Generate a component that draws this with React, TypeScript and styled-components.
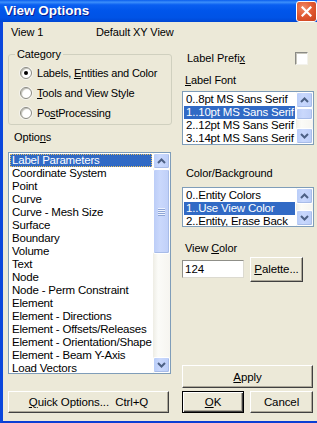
import React from "react";
import styled, { createGlobalStyle } from "styled-components";

const Global = createGlobalStyle`
  html, body { margin: 0; padding: 0; background: #ECE9D8; }
  body { width: 317px; height: 423px; overflow: hidden; font-family: "Liberation Sans", Arial, sans-serif; }
  * { box-sizing: border-box; }
`;

const Window = styled.div`
  width: 317px;
  height: 423px;
  display: flex;
  flex-direction: column;
  background: #ECE9D8;
  font-family: "Liberation Sans", Arial, sans-serif;
  font-size: 11px;
  color: #000;
  overflow: hidden;
`;

const TitleBar = styled.div`
  height: 22px;
  flex: none;
  display: flex;
  align-items: center;
  justify-content: space-between;
  padding: 0 0 1px 4px;
  background: linear-gradient(
    to bottom,
    #0a5ded 0%,
    #3c8ffb 10%,
    #0a5ff1 22%,
    #0055ea 50%,
    #0053e6 80%,
    #0047d4 100%
  );
`;

const Title = styled.span`
  font-family: "Liberation Sans", Arial, sans-serif;
  font-weight: bold;
  font-size: 13.5px;
  color: #fff;
  text-shadow: 1px 1px 0 #0a1d8f;
`;

const CloseButton = styled.div`
  width: 21px;
  height: 21px;
  margin-top: 1px;
  border: 1px solid #fff;
  border-radius: 3px;
  background: radial-gradient(circle at 35% 30%, #f08a66 0%, #e25b33 45%, #c9401c 100%);
  display: flex;
  align-items: center;
  justify-content: center;
`;

const Body = styled.div`
  flex: 1;
  display: flex;
  flex-direction: column;
  border-left: 3px solid #0b47dc;
  border-bottom: 3px solid #0a3ed4;
  padding: 4px 0 8px 5px;
`;

const HeaderRow = styled.div`
  display: flex;
  height: 13px;
  line-height: 13px;
  padding-left: 3px;
`;

const HeaderCell = styled.span<{ $w?: number }>`
  width: ${(p) => (p.$w ? `${p.$w}px` : "auto")};
  letter-spacing: -0.1px;
`;

const Columns = styled.div`
  flex: 1;
  display: flex;
  gap: 10px;
  margin-top: 9px;
`;

const LeftColumn = styled.div`
  width: 164px;
  display: flex;
  flex-direction: column;
`;

const RightColumn = styled.div`
  width: 132px;
  display: flex;
  flex-direction: column;
`;

const GroupBox = styled.fieldset`
  margin: 0;
  padding: 2px 0 0 6px;
  border: 1px solid #d0d0bf;
  border-radius: 3px;
  min-width: 0;
  height: 77px;
`;

const Legend = styled.legend`
  padding: 0 2px;
  line-height: 13px;
  height: 13px;
  letter-spacing: -0.1px;
`;

const RadioRow = styled.div`
  display: flex;
  align-items: center;
  height: 20px;
  padding-left: 5px;
  gap: 5px;
  letter-spacing: -0.2px;
`;

const RadioCircle = styled.span<{ $checked?: boolean }>`
  width: 12px;
  height: 12px;
  border-radius: 50%;
  background: #fff;
  border: 1px solid #8a8a80;
  box-shadow: inset 1px 1px 1px #bdbdb3, 0 0 0 1px #f4f3ee;
  display: flex;
  align-items: center;
  justify-content: center;
  &::after {
    content: "";
    width: 4px;
    height: 4px;
    border-radius: 50%;
    background: ${(p) => (p.$checked ? "#000" : "transparent")};
  }
`;

const Label = styled.div<{ $pad?: number; $mt?: number }>`
  line-height: 13px;
  height: 13px;
  padding-left: ${(p) => p.$pad ?? 0}px;
  margin-top: ${(p) => p.$mt ?? 0}px;
  letter-spacing: -0.1px;
`;

const ListBox = styled.div<{ $h: number; $mt: number; $w?: number }>`
  height: ${(p) => p.$h}px;
  width: ${(p) => (p.$w ? `${p.$w}px` : "100%")};
  margin-top: ${(p) => p.$mt}px;
  border: 1px solid #7f9db9;
  background: #fff;
  display: flex;
  overflow: hidden;
`;

const ListItems = styled.div`
  flex: 1;
  padding: 1px 1px 0 1px;
  overflow: hidden;
  min-width: 0;
`;

const ListItem = styled.div<{ $selected?: boolean; $focus?: boolean }>`
  height: 13px;
  line-height: 13px;
  padding-left: 2px;
  white-space: nowrap;
  font-size: 11.5px;
  letter-spacing: -0.2px;
  background: ${(p) => (p.$selected ? "#316ac5" : "transparent")};
  color: ${(p) => (p.$selected ? "#fff" : "#000")};
  outline: ${(p) => (p.$focus ? "1px dotted #e8c060" : "none")};
  outline-offset: -1px;
`;

const ScrollBar = styled.div`
  width: 17px;
  flex: none;
  display: flex;
  flex-direction: column;
  background: #f7f6f0;
`;

const ArrowButton = styled.div`
  height: 16px;
  flex: 0 1 16px;
  min-height: 0;
  border: 1px solid #fff;
  border-radius: 2px;
  background: linear-gradient(to right, #b9cdf8, #c9d8fd 40%, #bccef8);
  box-shadow: inset -1px -1px 0 #a8bce8;
  display: flex;
  align-items: center;
  justify-content: center;
`;

const Track = styled.div`
  flex: 1 1 auto;
  min-height: 0;
  display: flex;
  flex-direction: column;
  background: linear-gradient(to right, #eeede5, #fbfbf8 30%, #f6f5f0);
`;

const Thumb = styled.div<{ $h: number; $mt: number }>`
  height: ${(p) => p.$h}px;
  margin-top: ${(p) => p.$mt}px;
  flex: none;
  border: 1px solid #fff;
  border-radius: 2px;
  background: linear-gradient(to right, #bccdf7, #cad8fc 40%, #bfcff8);
  box-shadow: inset -1px -1px 0 #a8bce8;
  display: flex;
  flex-direction: column;
  align-items: center;
  justify-content: center;
  gap: 1px;
`;

const Grip = styled.span`
  width: 7px;
  height: 1px;
  background: #eef3ff;
  box-shadow: 0 1px 0 #8da4d6;
`;

const Underline = styled.span`
  text-decoration: underline;
  text-underline-offset: 1px;
`;

const PrefixRow = styled.div`
  height: 20px;
  display: flex;
  align-items: center;
  justify-content: space-between;
  padding: 0 6px 0 5px;
`;

const CheckBox = styled.span`
  width: 13px;
  height: 13px;
  background: #fff;
  border: 1px solid;
  border-color: #8b8b85 #f3f2ec #f3f2ec #8b8b85;
  box-shadow: inset 1px 1px 0 #c8c7bd;
`;

const InputRow = styled.div`
  display: flex;
  align-items: center;
  gap: 6px;
  height: 26px;
  margin-top: 1px;
`;

const TextInput = styled.div`
  width: 62px;
  height: 18px;
  background: #fff;
  border: 1px solid;
  border-color: #8f8f88 #dcdad0 #dcdad0 #8f8f88;
  padding-left: 2px;
  line-height: 16px;
  font-size: 11.5px;
`;

const Button = styled.div<{ $w?: number; $h?: number; $default?: boolean }>`
  width: ${(p) => (p.$w ? `${p.$w}px` : "100%")};
  height: ${(p) => p.$h ?? 22}px;
  flex: none;
  display: flex;
  align-items: center;
  justify-content: center;
  background: #ece9d8;
  border: 1px solid;
  border-color: ${(p) => (p.$default ? "#000" : "#fff #404040 #404040 #fff")};
  box-shadow: ${(p) =>
    p.$default
      ? "inset 1px 1px 0 #fff, inset -1px -1px 0 #404040, inset -2px -2px 0 #aca899"
      : "inset -1px -1px 0 #aca899"};
  font-size: 11.5px;
  letter-spacing: -0.1px;
`;

const QuickButton = styled(Button)`
  margin-top: 17px;
  width: 161px;
`;

const Spacer = styled.div`
  flex: 1;
`;

const BottomRow = styled.div`
  display: flex;
  gap: 6px;
  margin-top: 3px;
`;

const ChevronUp = () => (
  <svg width="9" height="6" viewBox="0 0 9 6">
    <path d="M1 5 L4.5 1.5 L8 5" fill="none" stroke="#4d6185" strokeWidth="2" />
  </svg>
);

const ChevronDown = () => (
  <svg width="9" height="6" viewBox="0 0 9 6">
    <path d="M1 1 L4.5 4.5 L8 1" fill="none" stroke="#4d6185" strokeWidth="2" />
  </svg>
);

const Scroll: React.FC<{ thumb?: { h: number; mt: number } }> = ({ thumb }) => (
  <ScrollBar>
    <ArrowButton>
      <ChevronUp />
    </ArrowButton>
    <Track>
      {thumb && (
        <Thumb $h={thumb.h} $mt={thumb.mt}>
          {thumb.h > 20 && (
            <>
              <Grip />
              <Grip />
              <Grip />
              <Grip />
            </>
          )}
        </Thumb>
      )}
    </Track>
    <ArrowButton>
      <ChevronDown />
    </ArrowButton>
  </ScrollBar>
);

const options = [
  "Label Parameters",
  "Coordinate System",
  "Point",
  "Curve",
  "Curve - Mesh Size",
  "Surface",
  "Boundary",
  "Volume",
  "Text",
  "Node",
  "Node - Perm Constraint",
  "Element",
  "Element - Directions",
  "Element - Offsets/Releases",
  "Element - Orientation/Shape",
  "Element - Beam Y-Axis",
  "Load Vectors",
];

const fonts = [
  "0..8pt MS Sans Serif",
  "1..10pt MS Sans Serif",
  "2..12pt MS Sans Serif",
  "3..14pt MS Sans Serif",
];

const colors = ["0..Entity Colors", "1..Use View Color", "2..Entity, Erase Back"];

export default function App() {
  return (
    <>
      <Global />
      <Window>
        <TitleBar>
          <Title>View Options</Title>
          <CloseButton>
            <svg width="11" height="11" viewBox="0 0 11 11">
              <path d="M1.5 1.5 L9.5 9.5 M9.5 1.5 L1.5 9.5" stroke="#fff" strokeWidth="2.2" strokeLinecap="square" />
            </svg>
          </CloseButton>
        </TitleBar>
        <Body>
          <HeaderRow>
            <HeaderCell $w={85}>View 1</HeaderCell>
            <HeaderCell>Default XY View</HeaderCell>
          </HeaderRow>
          <Columns>
            <LeftColumn>
              <GroupBox>
                <Legend>Category</Legend>
                <RadioRow>
                  <RadioCircle $checked />
                  <span>
                    Labels, <Underline>E</Underline>ntities and Color
                  </span>
                </RadioRow>
                <RadioRow>
                  <RadioCircle />
                  <span>
                    <Underline>T</Underline>ools and View Style
                  </span>
                </RadioRow>
                <RadioRow>
                  <RadioCircle />
                  <span>
                    Po<Underline>s</Underline>tProcessing
                  </span>
                </RadioRow>
              </GroupBox>
              <Label $pad={6} $mt={6}>
                Optio<Underline>n</Underline>s
              </Label>
              <ListBox $h={222} $mt={8} $w={163}>
                <ListItems>
                  {options.map((o, i) => (
                    <ListItem key={o} $selected={i === 0} $focus={i === 0}>
                      {o}
                    </ListItem>
                  ))}
                </ListItems>
                <Scroll thumb={{ h: 85, mt: 0 }} />
              </ListBox>
              <QuickButton>
                <span>
                  <Underline>Q</Underline>uick Options...&nbsp;&nbsp;Ctrl+Q
                </span>
              </QuickButton>
            </LeftColumn>
            <RightColumn>
              <PrefixRow>
                <span>
                  Label Prefi<Underline>x</Underline>
                </span>
                <CheckBox />
              </PrefixRow>
              <Label $pad={3} $mt={6}>
                <Underline>L</Underline>abel Font
              </Label>
              <ListBox $h={54} $mt={4}>
                <ListItems>
                  {fonts.map((f, i) => (
                    <ListItem key={f} $selected={i === 1}>
                      {f}
                    </ListItem>
                  ))}
                </ListItems>
                <Scroll thumb={{ h: 12, mt: 0 }} />
              </ListBox>
              <Label $pad={4} $mt={22}>
                Color/Background
              </Label>
              <ListBox $h={40} $mt={7}>
                <ListItems>
                  {colors.map((c, i) => (
                    <ListItem key={c} $selected={i === 1}>
                      {c}
                    </ListItem>
                  ))}
                </ListItems>
                <Scroll />
              </ListBox>
              <Label $pad={3} $mt={15}>
                View <Underline>C</Underline>olor
              </Label>
              <InputRow>
                <TextInput>124</TextInput>
                <Button $w={53} $h={25}>
                  <span>
                    <Underline>P</Underline>alette...
                  </span>
                </Button>
              </InputRow>
              <Spacer />
              <Button $w={131} $h={23}>
                <span>
                  <Underline>A</Underline>pply
                </span>
              </Button>
              <BottomRow>
                <Button $w={62} $default>
                  <span>
                    <Underline>O</Underline>K
                  </span>
                </Button>
                <Button $w={63}>
                  <span>Cancel</span>
                </Button>
              </BottomRow>
            </RightColumn>
          </Columns>
        </Body>
      </Window>
    </>
  );
}
